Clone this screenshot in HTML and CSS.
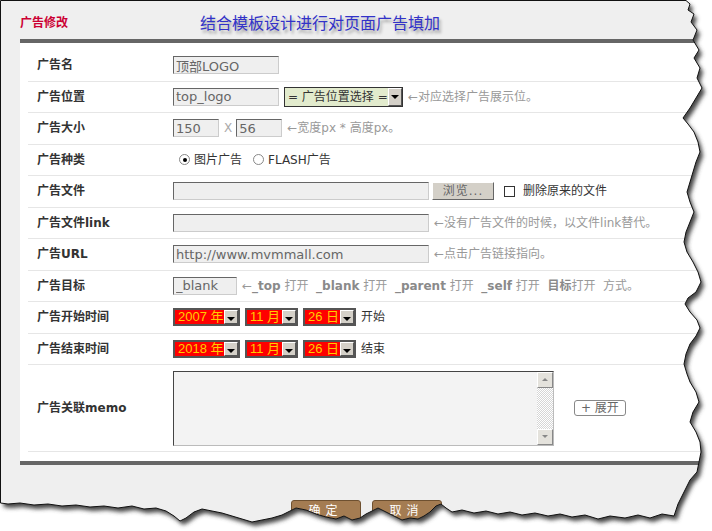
FILE: index.html
```html
<!DOCTYPE html>
<html lang="zh-CN">

<head>
    <meta charset="UTF-8">
    <title>广告修改</title>
    <link rel="stylesheet" href="styles.css">
</head>

<body>
    <div class="page">
        <div class="frame">
            <div class="head">
                <span class="title">广告修改</span>
                <span class="slogan">结合模板设计进行对页面广告填加</span>
            </div>

            <div class="sheet">
                <div class="row">
                    <div class="label">广告名</div>
                    <div class="field">
                        <input type="text" class="txt w-short" value="顶部LOGO">
                    </div>
                </div>
                <div class="row">
                    <div class="label">广告位置</div>
                    <div class="field">
                        <input type="text" class="txt w-short" value="top_logo">
                        <div class="pick">
                            <span class="pick-text">= 广告位置选择 =</span>
                            <span class="arrow"></span>
                        </div>
                        <span class="hint">←对应选择广告展示位。</span>
                    </div>
                </div>
                <div class="row">
                    <div class="label">广告大小</div>
                    <div class="field">
                        <input type="text" class="txt w-tiny" value="150">
                        <span class="times">X</span>
                        <input type="text" class="txt w-tiny" value="56">
                        <span class="hint">←宽度px * 高度px。</span>
                    </div>
                </div>
                <div class="row">
                    <div class="label">广告种类</div>
                    <div class="field kinds">
                        <span class="radio checked"></span><span>图片广告</span>
                        <span class="radio second"></span><span>FLASH广告</span>
                    </div>
                </div>
                <div class="row">
                    <div class="label">广告文件</div>
                    <div class="field">
                        <input type="text" class="txt w-long" value="">
                        <span class="browse">浏览...</span>
                        <span class="check"></span>
                        <span>删除原来的文件</span>
                    </div>
                </div>
                <div class="row">
                    <div class="label">广告文件link</div>
                    <div class="field">
                        <input type="text" class="txt w-long" value="">
                        <span class="hint">←没有广告文件的时候，以文件link替代。</span>
                    </div>
                </div>
                <div class="row">
                    <div class="label">广告URL</div>
                    <div class="field">
                        <input type="text" class="txt w-long" value="http://www.mvmmall.com">
                        <span class="hint">←点击广告链接指向。</span>
                    </div>
                </div>
                <div class="row">
                    <div class="label">广告目标</div>
                    <div class="field">
                        <input type="text" class="txt w-target" value="_blank">
                        <span class="hint">←<b>_top</b> 打开 &nbsp;<b>_blank</b> 打开 &nbsp;<b>_parent</b> 打开 &nbsp;<b>_self</b> 打开 &nbsp;<b>目标</b>打开 &nbsp;方式。</span>
                    </div>
                </div>
                <div class="row">
                    <div class="label">广告开始时间</div>
                    <div class="field">
                        <div class="date d-year"><span class="date-text">2007 年</span><span class="arrow"></span></div>
                        <div class="date d-small"><span class="date-text">11 月</span><span class="arrow"></span></div>
                        <div class="date d-small"><span class="date-text">26 日</span><span class="arrow"></span></div>
                        <span>开始</span>
                    </div>
                </div>
                <div class="row">
                    <div class="label">广告结束时间</div>
                    <div class="field">
                        <div class="date d-year"><span class="date-text">2018 年</span><span class="arrow"></span></div>
                        <div class="date d-small"><span class="date-text">11 月</span><span class="arrow"></span></div>
                        <div class="date d-small"><span class="date-text">26 日</span><span class="arrow"></span></div>
                        <span>结束</span>
                    </div>
                </div>
                <div class="row row-memo">
                    <div class="label">广告关联memo</div>
                    <div class="field">
                        <div class="memo">
                            <div class="scroll">
                                <span class="sbtn up"></span>
                                <span class="track"></span>
                                <span class="sbtn down"></span>
                            </div>
                        </div>
                        <span class="expand">+ 展开</span>
                    </div>
                </div>
            </div>

            <div class="actions">
                <span class="btn">确定</span>
                <span class="btn">取消</span>
            </div>
        </div>

        <!-- torn paper edge laid over the screenshot frame -->
        <svg class="torn" width="712" height="531" viewBox="0 0 712 531">
            <defs>
                <filter id="blur" x="-5%" y="-5%" width="110%" height="110%">
                    <feGaussianBlur stdDeviation="2"/>
                </filter>
                <clipPath id="outside">
                    <path clip-rule="evenodd" d="M0 0H712V531H0Z M0.5 0.5 L686 0.5 L690 4 L688 10 L694 14 L691 22 L697 30 L693 40 L699 50 L694 58 L700 68 L697 78 L702 88 L696 98 L690 108 L683 118 L688 124 L694 132 L698 142 L700 152 L696 162 L693 172 L690 182 L687 192 L690 202 L694 212 L690 222 L686 232 L684 242 L687 252 L693 262 L698 272 L701 282 L696 292 L688 298 L685 304 L690 312 L697 320 L700 328 L696 336 L690 344 L686 354 L684 364 L687 374 L690 382 L696 392 L699 402 L693 412 L690 422 L696 432 L700 442 L701 452 L699 462 L697 472 L690 480 L686 488 L682 496 L678 504 L674 516 L662 514 L650 518 L638 515 L625 518 L610 516 L598 519 L585 515 L572 517 L560 514 L548 516 L535 513 L522 515 L510 512 L498 514 L486 511 L474 513 L462 510 L452 512 L446 508 L441 504 L436 506 L430 512 L424 516 L418 519 L410 518 L402 520 L394 516 L386 512 L378 508 L372 511 L366 514 L360 518 L352 520 L344 516 L336 519 L326 517 L316 514 L306 510 L296 508 L290 511 L282 515 L272 518 L262 520 L252 522 L242 519 L232 516 L222 513 L212 511 L202 509 L194 512 L186 518 L180 521 L174 516 L166 511 L156 508 L144 509 L132 506 L118 508 L104 506 L90 507 L76 505 L62 506 L48 504 L34 505 L20 503 L8 504 L0.5 503 Z"/>
                </clipPath>
            </defs>
            <path fill="#fff" fill-rule="evenodd" d="M0 0H712V531H0Z M0.5 0.5 L686 0.5 L690 4 L688 10 L694 14 L691 22 L697 30 L693 40 L699 50 L694 58 L700 68 L697 78 L702 88 L696 98 L690 108 L683 118 L688 124 L694 132 L698 142 L700 152 L696 162 L693 172 L690 182 L687 192 L690 202 L694 212 L690 222 L686 232 L684 242 L687 252 L693 262 L698 272 L701 282 L696 292 L688 298 L685 304 L690 312 L697 320 L700 328 L696 336 L690 344 L686 354 L684 364 L687 374 L690 382 L696 392 L699 402 L693 412 L690 422 L696 432 L700 442 L701 452 L699 462 L697 472 L690 480 L686 488 L682 496 L678 504 L674 516 L662 514 L650 518 L638 515 L625 518 L610 516 L598 519 L585 515 L572 517 L560 514 L548 516 L535 513 L522 515 L510 512 L498 514 L486 511 L474 513 L462 510 L452 512 L446 508 L441 504 L436 506 L430 512 L424 516 L418 519 L410 518 L402 520 L394 516 L386 512 L378 508 L372 511 L366 514 L360 518 L352 520 L344 516 L336 519 L326 517 L316 514 L306 510 L296 508 L290 511 L282 515 L272 518 L262 520 L252 522 L242 519 L232 516 L222 513 L212 511 L202 509 L194 512 L186 518 L180 521 L174 516 L166 511 L156 508 L144 509 L132 506 L118 508 L104 506 L90 507 L76 505 L62 506 L48 504 L34 505 L20 503 L8 504 L0.5 503 Z"/>
            <g clip-path="url(#outside)">
                <path fill="#444" filter="url(#blur)" transform="translate(3 4)" d="M0.5 0.5 L686 0.5 L690 4 L688 10 L694 14 L691 22 L697 30 L693 40 L699 50 L694 58 L700 68 L697 78 L702 88 L696 98 L690 108 L683 118 L688 124 L694 132 L698 142 L700 152 L696 162 L693 172 L690 182 L687 192 L690 202 L694 212 L690 222 L686 232 L684 242 L687 252 L693 262 L698 272 L701 282 L696 292 L688 298 L685 304 L690 312 L697 320 L700 328 L696 336 L690 344 L686 354 L684 364 L687 374 L690 382 L696 392 L699 402 L693 412 L690 422 L696 432 L700 442 L701 452 L699 462 L697 472 L690 480 L686 488 L682 496 L678 504 L674 516 L662 514 L650 518 L638 515 L625 518 L610 516 L598 519 L585 515 L572 517 L560 514 L548 516 L535 513 L522 515 L510 512 L498 514 L486 511 L474 513 L462 510 L452 512 L446 508 L441 504 L436 506 L430 512 L424 516 L418 519 L410 518 L402 520 L394 516 L386 512 L378 508 L372 511 L366 514 L360 518 L352 520 L344 516 L336 519 L326 517 L316 514 L306 510 L296 508 L290 511 L282 515 L272 518 L262 520 L252 522 L242 519 L232 516 L222 513 L212 511 L202 509 L194 512 L186 518 L180 521 L174 516 L166 511 L156 508 L144 509 L132 506 L118 508 L104 506 L90 507 L76 505 L62 506 L48 504 L34 505 L20 503 L8 504 L0.5 503 Z"/>
            </g>
            <path fill="none" stroke="#111" stroke-width="1" d="M0.5 0.5 L686 0.5 L690 4 L688 10 L694 14 L691 22 L697 30 L693 40 L699 50 L694 58 L700 68 L697 78 L702 88 L696 98 L690 108 L683 118 L688 124 L694 132 L698 142 L700 152 L696 162 L693 172 L690 182 L687 192 L690 202 L694 212 L690 222 L686 232 L684 242 L687 252 L693 262 L698 272 L701 282 L696 292 L688 298 L685 304 L690 312 L697 320 L700 328 L696 336 L690 344 L686 354 L684 364 L687 374 L690 382 L696 392 L699 402 L693 412 L690 422 L696 432 L700 442 L701 452 L699 462 L697 472 L690 480 L686 488 L682 496 L678 504 L674 516 L662 514 L650 518 L638 515 L625 518 L610 516 L598 519 L585 515 L572 517 L560 514 L548 516 L535 513 L522 515 L510 512 L498 514 L486 511 L474 513 L462 510 L452 512 L446 508 L441 504 L436 506 L430 512 L424 516 L418 519 L410 518 L402 520 L394 516 L386 512 L378 508 L372 511 L366 514 L360 518 L352 520 L344 516 L336 519 L326 517 L316 514 L306 510 L296 508 L290 511 L282 515 L272 518 L262 520 L252 522 L242 519 L232 516 L222 513 L212 511 L202 509 L194 512 L186 518 L180 521 L174 516 L166 511 L156 508 L144 509 L132 506 L118 508 L104 506 L90 507 L76 505 L62 506 L48 504 L34 505 L20 503 L8 504 L0.5 503 Z"/>
        </svg>
    </div>
</body>

</html>
```

FILE: styles.css
```css
body {
    margin: 0;
    background: #fff;
    font-family: "DejaVu Sans", "Noto Sans CJK SC", sans-serif;
    font-size: 12px;
    color: #333;
}

.page {
    position: relative;
    width: 712px;
    height: 531px;
    overflow: hidden;
}

.frame {
    height: 531px;
    padding-left: 20px;
    box-sizing: border-box;
    background: #efefef;
}

.head {
    height: 39px;
    padding-top: 4px;
    box-sizing: border-box;
    display: flex;
    align-items: center;
}

.title {
    width: 180px;
    color: #cc0033;
    font-weight: bold;
}

.slogan {
    font-family: "Noto Sans CJK SC", sans-serif;
    font-size: 16px;
    color: #3232c8;
    text-shadow: 2px 3px 3px rgba(0, 0, 0, 0.35);
}

.sheet {
    background: #fff;
    border-top: 4px solid #666;
    border-bottom: 4px solid #666;
    padding: 7px 0 9px 8px;
}

.row {
    display: flex;
    align-items: center;
    height: 31.5px;
    box-sizing: border-box;
    border-bottom: 1px solid #e6e6e6;
    line-height: 16px;
}

.row-memo {
    height: 87px;
}

.label {
    width: 145px;
    padding-left: 9px;
    box-sizing: border-box;
    font-weight: bold;
    color: #333;
}

.field {
    display: flex;
    align-items: center;
    gap: 5px;
    white-space: nowrap;
}

.txt {
    height: 18px;
    box-sizing: border-box;
    margin: 0;
    padding: 0 2px;
    border: 1px solid;
    border-color: #666 #ccc #ccc #666;
    background: #efefef;
    font-family: "DejaVu Sans", "Noto Sans CJK SC", sans-serif;
    font-size: 13px;
    color: #666;
}

.w-short { width: 106px; }
.w-tiny { width: 46px; }
.w-long { width: 256px; }
.w-target { width: 64px; }

.times {
    color: #aaa;
    margin-right: -1px;
}

.hint {
    color: #999;
}

.hint b {
    color: #8a8a8a;
}

.arrow {
    position: relative;
    flex: none;
    width: 14px;
    box-sizing: border-box;
    background: #d4d0c8;
    border: 1px solid;
    border-color: #fff #555 #555 #fff;
}

.arrow::after {
    content: "";
    position: absolute;
    left: 2px;
    top: 6px;
    border-left: 4px solid transparent;
    border-right: 4px solid transparent;
    border-top: 4px solid #000;
}

.pick {
    display: flex;
    height: 20px;
    width: 119px;
    box-sizing: border-box;
    border: 1px solid #333;
    background: #e2ebcd;
}

.pick-text {
    flex: 1;
    line-height: 18px;
    padding-left: 3px;
    color: #333;
}

.date {
    display: flex;
    height: 18px;
    box-sizing: border-box;
    border: 2px solid #555;
    background: #f00;
}

.d-year { width: 67px; }
.d-small { width: 53px; }

.date-text {
    flex: 1;
    overflow: hidden;
    white-space: nowrap;
    line-height: 14px;
    padding-left: 3px;
    font-family: "Liberation Sans", "Noto Sans CJK SC", sans-serif;
    font-size: 13px;
    color: #ffcc00;
}

.kinds {
    padding-left: 6px;
    gap: 4px;
}

.radio {
    position: relative;
    width: 11px;
    height: 11px;
    box-sizing: border-box;
    border: 1px solid #888;
    border-radius: 50%;
    background: #fff;
}

.radio.second {
    margin-left: 7px;
}

.radio.checked::after {
    content: "";
    position: absolute;
    left: 2.5px;
    top: 2.5px;
    width: 4px;
    height: 4px;
    border-radius: 50%;
    background: #000;
}

.browse {
    width: 62px;
    height: 18px;
    box-sizing: border-box;
    margin-left: -2px;
    background: #d4d0c8;
    border: 1px solid;
    border-color: #fff #666 #666 #fff;
    text-align: center;
    line-height: 16px;
    color: #666;
    letter-spacing: 1px;
}

.check {
    width: 11px;
    height: 11px;
    box-sizing: border-box;
    margin: 0 3px 0 5px;
    border: 1px solid #333;
    background: #fff;
}

.memo {
    display: flex;
    justify-content: flex-end;
    width: 381px;
    height: 75px;
    box-sizing: border-box;
    border: 1px solid;
    border-color: #444 #bbb #bbb #444;
    background: #f3f3f3;
}

.scroll {
    display: flex;
    flex-direction: column;
    width: 16px;
}

.sbtn {
    position: relative;
    height: 16px;
    box-sizing: border-box;
    background: #e4e2dc;
    border: 1px solid;
    border-color: #fff #888 #888 #fff;
}

.sbtn::after {
    content: "";
    position: absolute;
    left: 4px;
    top: 5px;
    border-left: 3px solid transparent;
    border-right: 3px solid transparent;
}

.sbtn.up::after {
    border-bottom: 3px solid #888;
}

.sbtn.down::after {
    border-top: 3px solid #888;
}

.track {
    flex: 1;
    background: repeating-conic-gradient(#fff 0 25%, #d6d6d6 0 50%) 0 0 / 2px 2px;
}

.expand {
    margin-left: 15px;
    padding: 0 6px;
    height: 16px;
    line-height: 14px;
    box-sizing: border-box;
    border: 1px solid #888;
    border-radius: 3px;
    background: #fff;
    color: #666;
}

.actions {
    display: flex;
    justify-content: center;
    gap: 11px;
    padding-top: 35px;
}

.btn {
    width: 70px;
    height: 24px;
    box-sizing: border-box;
    border: 1px solid #6e5030;
    border-radius: 3px 3px 0 0;
    background: #a47c52;
    color: #fff;
    text-align: center;
    line-height: 20px;
    letter-spacing: 5px;
}

.torn {
    position: absolute;
    left: 0;
    top: 0;
}
```
